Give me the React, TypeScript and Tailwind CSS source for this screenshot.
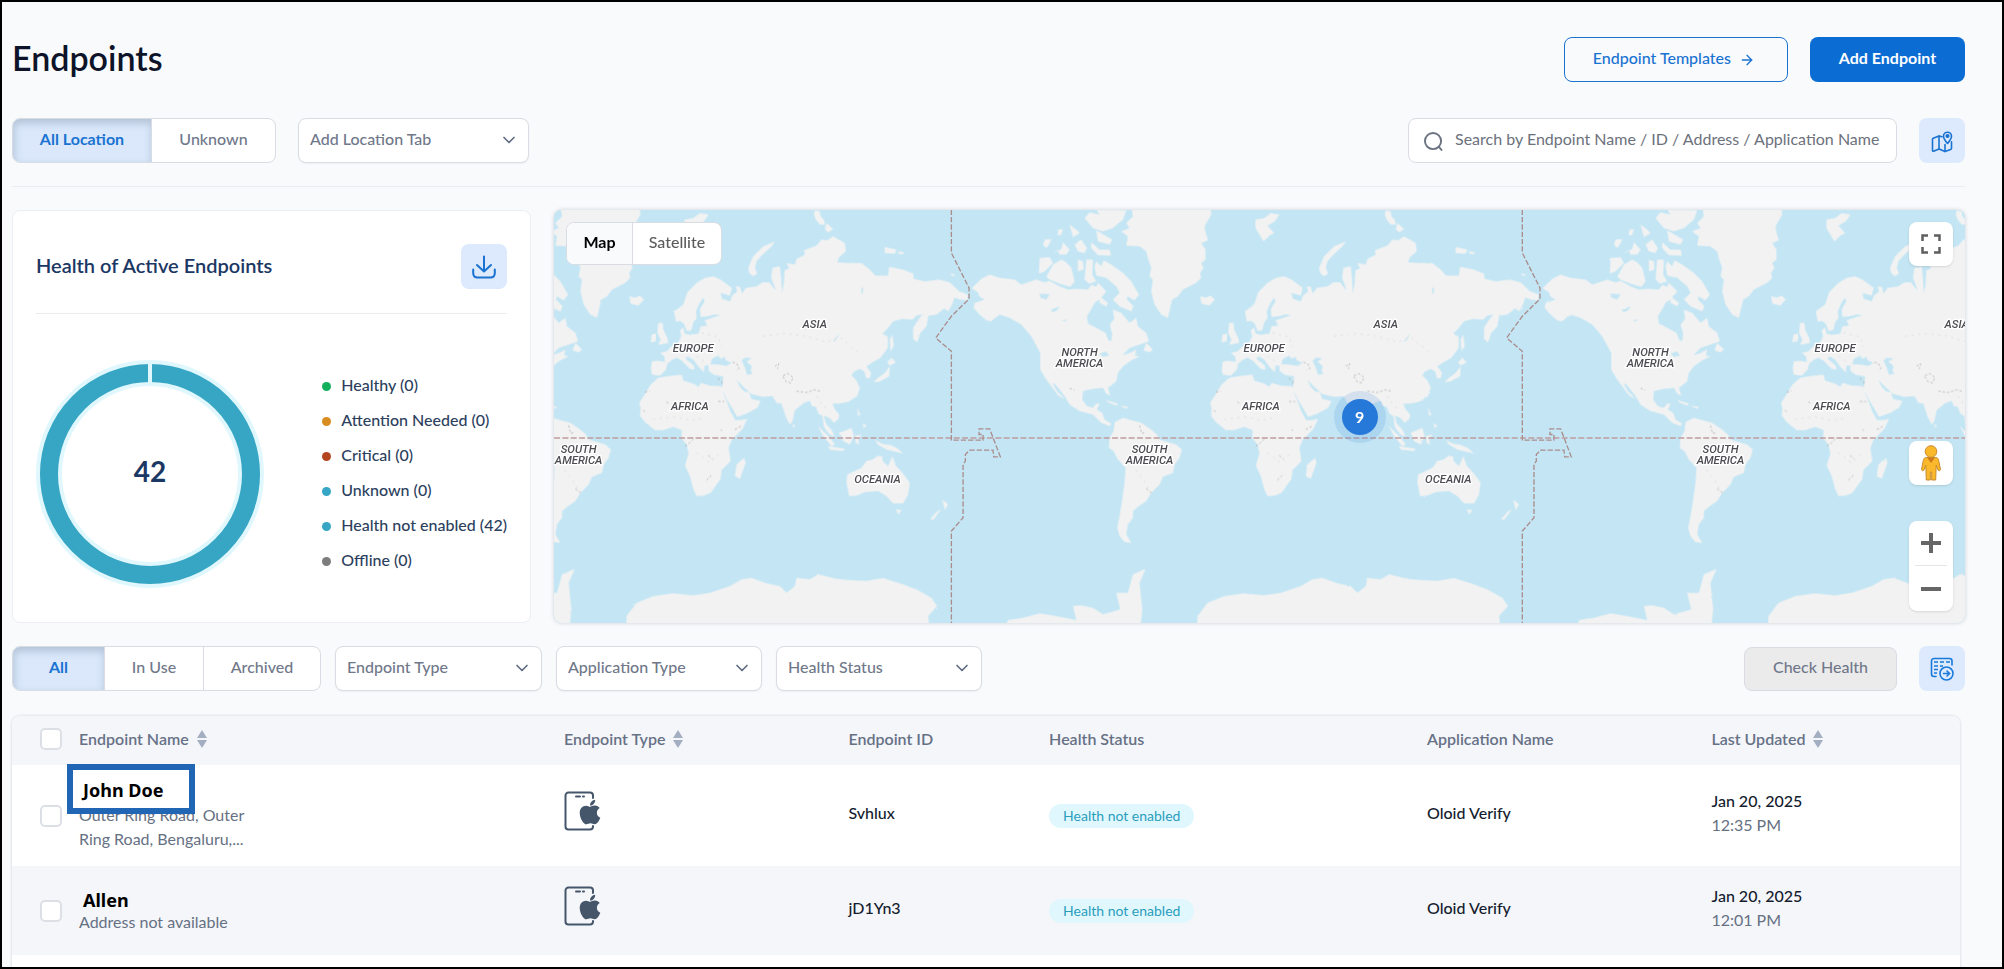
import type { ReactNode } from "react";
import { ArrowRight, ChevronDown } from "lucide-react";
import { FaApple } from "react-icons/fa";

type Endpoint = {
  id: string;
  name: string;
  address: string;
  app: string;
  date: string;
  time: string;
  highlighted?: boolean;
};

const endpoints: Endpoint[] = [
  {
    id: "Svhlux",
    name: "John Doe",
    address: "Outer Ring Road, Outer Ring Road, Bengaluru,...",
    app: "Oloid Verify",
    date: "Jan 20, 2025",
    time: "12:35 PM",
    highlighted: true,
  },
  {
    id: "jD1Yn3",
    name: "Allen",
    address: "Address not available",
    app: "Oloid Verify",
    date: "Jan 20, 2025",
    time: "12:01 PM",
  },
];

const legend = [
  { label: "Healthy (0)", dot: "bg-[#12b05c]" },
  { label: "Attention Needed (0)", dot: "bg-[#d98c1f]" },
  { label: "Critical (0)", dot: "bg-[#b3461f]" },
  { label: "Unknown (0)", dot: "bg-[#37a6c4]" },
  { label: "Health not enabled (42)", dot: "bg-[#37a6c4]" },
  { label: "Offline (0)", dot: "bg-[#7d7d7d]" },
];

// One world is WORLD units wide, the map repeats it sideways.
const WORLD = 1714;

const eastLand = [
  // Europe and Asia
  "306,525 303,508 306,485 325,484 345,487 343,470 330,460 350,455 365,440 385,428 394,410 390,392 400,383 404,402 420,406 446,402 452,380 472,378 464,362 480,357 495,352 512,347 495,344 472,350 452,352 450,328 464,305 460,294 448,312 438,335 440,355 430,368 424,392 410,394 402,372 390,364 378,366 372,335 400,315 412,278 440,250 465,235 490,230 512,240 546,265 540,288 512,280 516,298 540,305 547,287 562,276 558,260 570,262 576,282 588,265 620,260 638,248 658,248 670,264 678,272 664,235 668,205 690,200 694,240 696,282 702,250 704,212 718,206 710,190 735,195 740,178 765,165 762,152 800,138 815,120 832,122 850,110 885,130 888,155 868,172 862,188 900,190 935,190 960,210 976,228 1015,228 1018,202 1060,210 1090,222 1092,238 1125,245 1168,240 1200,248 1228,275 1255,285 1252,302 1232,300 1214,294 1208,312 1196,335 1184,326 1160,345 1136,348 1130,380 1112,400 1102,428 1090,418 1090,385 1104,362 1118,344 1100,348 1088,360 1058,358 1030,365 1012,388 998,402 1014,412 1014,445 992,475 968,488 950,500 964,520 960,536 948,535 944,516 930,508 912,516 905,528 920,542 930,565 922,590 895,607 868,612 848,612 854,628 868,645 866,658 852,670 840,656 822,648 828,672 846,692 854,712 838,704 822,682 818,650 806,642 798,622 786,620 780,604 762,610 735,632 728,665 720,675 708,652 695,612 680,610 668,590 640,592 605,584 578,560 560,540 570,562 584,576 598,578 604,598 632,605 622,625 590,642 562,652 548,628 532,602 520,578 514,572 518,552 520,530 492,526 476,514 476,498 464,498 462,518 446,502 430,480 414,470 406,476 432,498 434,510 420,508 396,484 380,474 364,482 352,492 348,510 330,528",
  // Africa
  "325,535 350,530 395,525 400,543 430,552 446,562 452,550 480,558 513,560 522,585 530,605 542,636 556,662 574,662 592,658 578,688 545,722 536,745 542,785 515,812 512,838 482,880 462,888 440,890 430,868 420,830 405,798 416,762 410,735 394,715 396,692 370,682 340,692 315,692 285,668 270,648 272,628 268,610 282,588 302,555",
  "325,370 338,370 340,390 352,415 355,430 325,436 332,420 322,400",
  "305,405 320,402 318,425 302,428",
  "238,290 255,294 270,288 282,300 265,318 242,312",
  "675,125 665,140 635,168 620,185 615,205 622,222 610,230 598,220 595,205 610,170 640,140",
  "404,60 430,55 450,40 476,45 462,65 440,78 460,100 446,108 428,125 416,105 404,85",
  "795,32 810,35 812,50 822,60 825,75 810,75 798,60 792,45",
  "830,70 850,88 835,98 825,88",
  "1005,142 1040,150 1035,162 1005,160",
  "1045,155 1062,158 1060,164 1046,162",
  "1200,222 1215,224 1210,230",
  "1028,405 1032,440 1022,455 1020,420",
  "1025,475 1038,488 1020,498 1012,488",
  "1020,500 1018,530 990,545 970,548 985,535 1005,520",
  "922,625 932,645 925,650",
  "940,670 950,680 940,685",
  "728,672 736,680 731,685",
  "870,700 905,685 912,710 900,735 880,725",
  "805,680 840,715 855,735 845,740 820,710",
  "835,740 885,748 880,755 840,750",
  "915,710 935,705 925,720 928,735 918,730",
  "975,722 1000,734 1020,736 1042,746 1060,762 1030,755 1010,750 985,735",
  // Australia and New Zealand
  "892,825 920,812 935,805 950,785 968,780 985,768 998,772 998,785 1015,800 1028,770 1038,798 1060,822 1080,850 1075,885 1060,912 1030,912 1010,890 985,875 945,878 920,888 898,890 890,850",
  "1038,930 1055,932 1046,945",
  "1178,900 1195,915 1185,932",
  "1175,928 1150,962 1142,958 1160,938",
  "583,775 587,790 570,838 555,830 560,795",
  // Antarctica
  "228,1290 230,1250 260,1210 310,1190 370,1182 430,1188 480,1180 540,1160 575,1140 605,1135 650,1152 690,1160 710,1180 735,1160 740,1135 780,1140 805,1125 860,1138 900,1142 950,1144 1000,1136 1060,1155 1100,1170 1145,1195 1162,1220 1135,1250 1140,1290",
];

const westLand = [
  // North America
  "70,262 95,238 120,225 150,235 195,240 215,255 260,240 285,248 300,244 330,260 355,270 380,268 415,270 425,256 440,262 445,250 470,275 450,300 436,308 424,330 412,350 415,372 440,385 468,400 475,420 485,425 488,402 480,375 494,358 490,330 515,340 540,370 560,355 565,380 590,400 598,425 570,435 540,445 518,468 545,458 560,450 556,468 570,470 545,482 520,500 505,520 500,545 475,565 482,588 470,582 460,565 430,568 400,575 398,600 412,620 430,625 440,612 450,612 442,630 458,640 465,660 485,672 480,680 455,670 430,645 390,635 360,615 345,590 318,555 308,550 322,575 345,598 326,588 290,540 272,510 272,460 245,410 215,375 180,355 150,345 130,360 95,395 125,365 110,362 90,345 72,325 75,310 105,300 90,292 85,278 68,268",
  "590,430 610,450 600,458 582,452",
  "470,602 505,612 500,618 475,608",
  "510,618 535,622 530,628",
  // Arctic islands
  "270,175 300,172 310,190 285,215 268,222",
  "290,232 310,195 335,180 350,188 365,205 375,245 362,262 330,252 300,240",
  "440,185 455,200 462,182 485,195 520,220 545,245 568,285 555,302 534,290 532,300 552,320 545,335 510,320 490,300 510,280 500,260 470,235 440,228 435,200",
  "450,290 475,310 470,320 450,310",
  "420,38 450,45 440,30 530,32 520,60 490,85 460,95 430,85 405,55",
  "425,128 450,150 480,150 484,168 445,166 425,145",
  "440,92 488,120 480,135 445,125",
  "285,120 305,118 300,130 290,145 280,135",
  "310,160 335,148 340,128 360,150 350,165 330,165 325,150",
  "325,90 340,88 335,105 325,108",
  "360,75 380,90 390,100 370,112",
  "375,135 395,120 412,145 405,160 385,155",
  "385,180 400,185 402,210 385,215",
  "410,180 430,180 428,225 440,245 418,252 405,240",
  // Greenland
  "545,20 783,20 785,45 765,80 768,98 775,122 755,130 768,150 768,180 755,190 762,205 752,220 755,235 740,250 700,270 685,290 668,300 655,355 635,345 615,315 605,275 610,240 600,230 605,205 595,175 590,155 570,140 530,138 535,110 515,95 540,85 530,70 550,50",
  // South America
  "495,668 520,655 545,662 575,670 605,690 622,705 630,720 680,735 697,750 690,775 675,795 670,820 640,832 630,855 605,880 590,905 568,920 550,935 550,955 535,975 530,1005 545,1030 525,1028 510,1010 503,985 510,950 518,900 525,850 528,805 505,780 492,755 478,745 480,715 492,695",
  "165,1290 175,1262 220,1255 270,1242 320,1250 380,1262 370,1220 395,1218 430,1225 460,1245 512,1230 500,1180 535,1180 550,1125 588,1108 570,1150 578,1230 572,1290",
];

const seas = [
  "482,494 486,478 505,468 512,478 524,472 528,482 545,490 530,499 502,494",
  "575,482 586,474 605,476 590,486 606,500 602,512 608,522 592,526 584,502",
  "850,425 868,402 866,408 854,426",
  "935,262 940,268 938,285 934,278",
];

const lakes = [
  "270,282 300,284 290,300 272,294",
  "305,330 330,320 322,332 308,338",
  "335,362 352,360 346,365",
  "450,462 470,455 478,468 460,472",
];

function Label({ x, y, children }: { x: number; y: number; children: string }) {
  return (
    <text
      x={x}
      y={y}
      textAnchor="middle"
      className="fill-[#4c4c52] stroke-white font-['Roboto',sans-serif] text-[34px] italic [paint-order:stroke] [stroke-width:8px]"
    >
      {children}
    </text>
  );
}

function WorldMap() {
  const copies = [-1, 0, 1, 2];
  return (
    <svg
      viewBox="12 30 4236 1242"
      preserveAspectRatio="xMinYMid slice"
      className="absolute inset-0 h-full w-full"
      role="img"
      aria-label="World map"
    >
      <defs>
        <filter id="coast" x="0" y="0" width="100%" height="100%">
          <feTurbulence type="fractalNoise" baseFrequency="0.09" numOctaves="2" seed="4" />
          <feDisplacementMap in="SourceGraphic" scale="5" />
        </filter>
        <g id="land">
          <g fill="#f2f2f2">
            {eastLand.map((p) => (
              <polygon key={p} points={p} />
            ))}
          </g>
          <g fill="#c4e6f4">
            {seas.map((p) => (
              <polygon key={p} points={p} />
            ))}
          </g>
          <g transform="translate(1200 0)">
            <g fill="#f2f2f2">
              {westLand.map((p) => (
                <polygon key={p} points={p} />
              ))}
            </g>
            <g fill="#c4e6f4">
              {lakes.map((p) => (
                <polygon key={p} points={p} />
              ))}
            </g>
          </g>
          <g fill="none" stroke="#a9a3a5" strokeWidth="2" strokeDasharray="7 6">
            <path d="M675,500l12,-8l-4,16 M700,528l14,-6l16,12l-8,16l-14,-4l-8,-14z M740,575l30,4l24,-8l18,4" />
            <path d="M548,488l12,4l8,14l-10,6 M505,535l4,8 M516,545v14 M505,606h18 M285,578l14,-4" />
            <path d="M405,740l14,-10l12,-12 M475,768l12,10 M470,842l18,-18 M512,690l4,4 M555,690l22,-12" />
            <path d="M1770,678l6,24l14,-4 M1790,868l16,12 M1560,566l14,6 M350,606l6,8 M280,632l8,10" />
          </g>
          <g fill="none" stroke="#d8d5d6" strokeWidth="2" strokeDasharray="6 14">
            <path d="M640,410l60,-8l60,6l70,20l40,-16l30,26l30,24 M455,400l50,12l10,30 M440,470l30,20" />
            <path d="M310,660l60,-8l50,10l40,-6 M440,760l40,30l30,-30 M800,590l20,30l20,10 M1758,812l24,30l14,24" />
          </g>
        </g>
        <g id="labels">
          <path
            d="M1205,30V160L1258,265V298L1205,350L1158,415L1205,455V722H1300V705H1288V688H1320L1352,772H1332L1330,752H1260L1247,765V785L1240,795V955L1205,995V1290"
            fill="none"
            stroke="#a98d8d"
            strokeWidth="4"
            strokeDasharray="16 6"
          />
          <Label x={430} y={458}>EUROPE</Label>
          <Label x={795} y={385}>ASIA</Label>
          <Label x={420} y={632}>AFRICA</Label>
          <Label x={983} y={850}>OCEANIA</Label>
          <Label x={1590} y={468}>NORTH</Label>
          <Label x={1590} y={502}>AMERICA</Label>
          <Label x={1800} y={762}>SOUTH</Label>
          <Label x={1800} y={793}>AMERICA</Label>
        </g>
      </defs>
      <rect x="12" y="0" width="4300" height="1300" fill="#c4e6f4" />
      <g filter="url(#coast)">
        {copies.map((n) => (
          <use key={n} href="#land" x={n * WORLD} />
        ))}
      </g>
      <path d="M12,715H4300" stroke="#c09c9f" strokeWidth="5" strokeDasharray="18 7" />
      {copies.map((n) => (
        <use key={n} href="#labels" x={n * WORLD} />
      ))}
    </svg>
  );
}

function Donut() {
  return (
    <svg viewBox="0 0 228 228" className="size-57 shrink-0" role="img" aria-label="42 active endpoints">
      <circle cx="114" cy="114" r="101" fill="none" stroke="#e0f8fd" strokeWidth="26" />
      <circle cx="114" cy="114" r="101" fill="none" stroke="#37a6c4" strokeWidth="18" />
      <rect x="112" y="2" width="4" height="24" fill="#e0f8fd" />
      <text
        x="114"
        y="122"
        textAnchor="middle"
        className="fill-[#1b3764] font-['Lato',sans-serif] text-[28px] font-bold"
      >
        42
      </text>
    </svg>
  );
}

function MapPinIcon() {
  return (
    <svg viewBox="0 0 24 24" className="size-6" fill="none" stroke="#1a73d1" strokeWidth="1.6" strokeLinecap="round" strokeLinejoin="round">
      <path d="M12 7.800 9 7 3.2 9.3a1 1 0 0 0-.7.9v11.3c0 .6.5.9 1 .7L9 20l6 2.6 5.6-2.2c.6-.2.9-.6.9-1.1v-6.6" />
      <path d="M9 7v13M15 15.500v7" />
      <path d="M17.500 14.500c-2.200-2.600-4-4.700-4-7.300a4 4 0 0 1 8 0c0 2.600-1.800 4.700-4 7.300Z" />
      <circle cx="17.500" cy="7" r="1.300" fill="#1a73d1" />
    </svg>
  );
}

function DownloadIcon() {
  return (
    <svg viewBox="0 0 24 24" className="size-6" fill="none" stroke="#1a73d1" strokeWidth="2" strokeLinecap="round" strokeLinejoin="round">
      <path d="M12 1.500v14.500M5 10l7 6.500 7-6.500" />
      <path d="M1.200 14.500v3.500c0 3 1.600 4.500 4.500 4.500h12.600c2.900 0 4.500-1.500 4.500-4.500v-3.500" />
    </svg>
  );
}

function TableExportIcon() {
  return (
    <svg viewBox="0 0 24 24" className="size-6" fill="none" stroke="#1a7ad9" strokeWidth="1.600" strokeLinecap="round">
      <path d="M6 19.500H4a2.500 2.500 0 0 1-2.500-2.500V4A2.500 2.500 0 0 1 4 1.500h15.500A2.500 2.500 0 0 1 22 4v4" />
      <path d="M4 5h4M10 5h4M16 5h4M4 9h4M10 9h3M4 12.500h4M4 16h3" strokeLinecap="butt" />
      <circle cx="16.500" cy="16.500" r="6.500" />
      <path d="M13.500 16.500h5.500M17 14l2.500 2.500L17 19" />
    </svg>
  );
}

function PhoneAppleIcon() {
  return (
    <svg viewBox="0 0 38 40" className="h-10 w-[38px]" role="img" aria-label="iOS device">
      <path
        d="M29 7V4.500A3 3 0 0 0 26 1.500H4.500A3 3 0 0 0 1.500 4.500v31a3 3 0 0 0 3 3H26a3 3 0 0 0 3-3V35"
        fill="none"
        stroke="#45566b"
        strokeWidth="2"
        strokeLinecap="round"
      />
      <path d="M12 5.500h4M19 5.500h1" stroke="#45566b" strokeWidth="2" strokeLinecap="round" />
      <FaApple x={12} y={7} size={28} color="#45566b" />
    </svg>
  );
}

function Pegman() {
  return (
    <svg viewBox="0 0 20 36" className="h-9 w-5" stroke="#c98a2b" strokeWidth="1">
      <path
        d="M5.500 12.500h9c2 0 2.800 1.200 3.200 3l1.700 8.500c.2 1-.3 1.700-1.100 1.700-.8 0-1.300-.5-1.600-1.300l-1.500-4.400-.5 15h-4V27H9.300v8H5.300l-.5-15-1.500 4.400c-.3.8-.8 1.300-1.600 1.300-.8 0-1.300-.7-1.100-1.700l1.700-8.500c.4-1.800 1.200-3 3.200-3Z"
        fill="#f9b92b"
      />
      <path d="M6 12.500h8L10 18Z" fill="#d07a1c" stroke="none" />
      <circle cx="10" cy="6.500" r="5.800" fill="#f9b92b" />
    </svg>
  );
}

function SortIcon() {
  return (
    <svg viewBox="0 0 10 18" className="h-[18px] w-2.5" fill="#a3aec2">
      <path d="M5 0l5 8H0ZM5 18l5-8H0Z" />
    </svg>
  );
}

function Dropdown({ label, className }: { label: string; className: string }) {
  return (
    <div className={`relative ${className}`}>
      <select
        aria-label={label}
        className="h-[45px] w-full appearance-none rounded-lg border border-[#d9dce3] bg-white pb-1 pl-[11px] text-base text-[#70788a] shadow-xs"
      >
        <option>{label}</option>
      </select>
      <ChevronDown className="pointer-events-none absolute top-3 right-2.5 size-5 text-[#5f6b80]" />
    </div>
  );
}

function Tabs({ tabs }: { tabs: { label: string; className: string }[] }) {
  return (
    <div className="flex h-[45px] overflow-hidden rounded-lg border border-[#d9dce3] bg-white">
      {tabs.map((tab, i) => (
        <button
          key={tab.label}
          className={`pb-1 ${tab.className} ${
            i === 0
              ? "bg-[#dbe8fb] font-bold text-[#1a73d1] shadow-[inset_1px_4px_8px_#afc0d4]"
              : "border-l border-[#d9dce3] text-[#70788a]"
          }`}
        >
          {tab.label}
        </button>
      ))}
    </div>
  );
}

function IconButton({ label, children }: { label: string; children: ReactNode }) {
  return (
    <button
      aria-label={label}
      className="flex h-[45px] w-[46px] shrink-0 items-center justify-center rounded-lg bg-[#dde9fc]"
    >
      {children}
    </button>
  );
}

function HealthCard() {
  return (
    <section className="w-[519px] shrink-0 rounded-lg border border-[#eceef3] bg-white px-[23px] pt-[33px] pb-[34px]">
      <div className="flex items-center justify-between border-b border-[#eaecef] pb-6">
        <h2 className="pb-1 text-xl font-semibold text-[#1b3764]">Health of Active Endpoints</h2>
        <IconButton label="Download report">
          <DownloadIcon />
        </IconButton>
      </div>
      <div className="mt-[46px] flex items-center justify-between">
        <Donut />
        <ul className="flex flex-col gap-[11px] pb-1 text-base text-[#2d3f5e]">
          {legend.map((item) => (
            <li key={item.label} className="flex h-6 items-center gap-2.5">
              <span className={`mt-1 size-[9px] rounded-full ${item.dot}`} />
              {item.label}
            </li>
          ))}
        </ul>
      </div>
    </section>
  );
}

function MapCard() {
  return (
    <section className="relative min-w-0 flex-1 overflow-hidden rounded-lg bg-[#c4e6f4] shadow-[0_0_4px_#c9ced6]">
      <WorldMap />
      <div className="absolute top-3 left-3 flex h-[43px] overflow-hidden rounded-lg border border-[#d9dce3] bg-white">
        <button className="w-[66px] border-r border-[#d9dce3] bg-[#f9fafc] pb-1 font-bold text-black">Map</button>
        <button className="w-22 pb-1 text-[#5c5c5c]">Satellite</button>
      </div>
      <button className="absolute top-1/2 left-[57.1%] size-9 -translate-x-1/2 -translate-y-1/2 rounded-full bg-[#2679d8] font-bold text-white ring-8 ring-[#2679d8]/15">
        9
      </button>
      <div className="absolute top-3 right-3 bottom-3 flex flex-col">
        <button
          aria-label="Toggle fullscreen"
          className="flex size-11 items-center justify-center rounded-lg bg-white shadow"
        >
          <svg viewBox="0 0 20 20" className="size-5" fill="none" stroke="#5f5f5f" strokeWidth="2.5">
            <path d="M1.500 7V1.500H7M13 1.500h5.500V7M18.500 13v5.500H13M7 18.500H1.500V13" />
          </svg>
        </button>
        <button
          aria-label="Street View"
          className="mt-auto flex size-11 items-center justify-center rounded-lg bg-white shadow"
        >
          <Pegman />
        </button>
        <div className="mt-9 flex w-11 flex-col rounded-lg bg-white px-1.5 shadow">
          <button aria-label="Zoom in" className="flex h-[45px] items-center justify-center border-b border-[#e6e6e6]">
            <svg viewBox="0 0 20 20" className="size-5" stroke="#666" strokeWidth="4">
              <path d="M10 0v20M0 10h20" />
            </svg>
          </button>
          <button aria-label="Zoom out" className="flex h-[45px] items-center justify-center">
            <svg viewBox="0 0 20 20" className="size-5" stroke="#666" strokeWidth="4">
              <path d="M0 10h20" />
            </svg>
          </button>
        </div>
      </div>
    </section>
  );
}

const checkbox = "block size-[22px] appearance-none rounded-[5px] border-2 border-[#dcdfe5] bg-white";

function EndpointTable() {
  return (
    <div className="mr-[5px] overflow-hidden rounded-t-lg bg-white shadow-[0_0_3px_#c9ced8]">
      <table className="w-full table-fixed text-left text-base">
        <colgroup>
          <col className="w-[67px]" />
          <col className="w-[24.9%]" />
          <col className="w-[14.6%]" />
          <col className="w-[10.3%]" />
          <col className="w-[19.4%]" />
          <col className="w-[14.6%]" />
          <col />
        </colgroup>
        <thead className="bg-[#f4f6fa] text-[#677186]">
          <tr className="h-[49px] *:pb-1 *:font-semibold">
            <th className="pl-7">
              <input type="checkbox" aria-label="Select all endpoints" className={checkbox} />
            </th>
            <th>
              <span className="flex items-center gap-2">
                Endpoint Name <SortIcon />
              </span>
            </th>
            <th>
              <span className="flex items-center gap-2">
                Endpoint Type <SortIcon />
              </span>
            </th>
            <th>Endpoint ID</th>
            <th>Health Status</th>
            <th>Application Name</th>
            <th>
              <span className="flex items-center gap-2">
                Last Updated <SortIcon />
              </span>
            </th>
          </tr>
        </thead>
        <tbody className="text-[#141c2e]">
          {endpoints.map((row) => (
            <tr key={row.id} className={row.highlighted ? "h-[101px] bg-white" : "h-[89px] bg-[#f4f6fa]"}>
              <td className="pl-7">
                <input type="checkbox" aria-label={`Select ${row.name}`} className={checkbox} />
              </td>
              <td className="relative">
                {row.highlighted ? (
                  <>
                    <p className="w-44 pt-[22px] leading-6 font-normal text-[#667083]">{row.address}</p>
                    <span className="absolute -top-px -left-3 flex h-[50px] w-32 items-center border-6 border-[#2066b4] bg-white pt-0.5 pl-2.5 font-['Noto_Sans',sans-serif] text-lg font-bold text-black">
                      {row.name}
                    </span>
                  </>
                ) : (
                  <>
                    <p className="pl-1 font-['Noto_Sans',sans-serif] text-lg leading-6 font-bold text-black">
                      {row.name}
                    </p>
                    <p className="pb-0.5 leading-5 font-normal text-[#667083]">{row.address}</p>
                  </>
                )}
              </td>
              <td className="pb-2.5">
                <PhoneAppleIcon />
              </td>
              <td className="pb-1.5">{row.id}</td>
              <td>
                <span className="inline-block rounded-full bg-[#e0f8fd] px-3.5 pb-px text-sm leading-[23px] font-normal text-[#2a9dbd]">
                  Health not enabled
                </span>
              </td>
              <td className="pb-1.5">{row.app}</td>
              <td className="pb-1.5 leading-6">
                {row.date}
                <br />
                <span className="font-normal text-[#667083]">{row.time}</span>
              </td>
            </tr>
          ))}
          <tr className="h-[89px]">
            <td colSpan={7} />
          </tr>
        </tbody>
      </table>
    </div>
  );
}

export default function App() {
  return (
    <div className="h-screen overflow-hidden border-2 border-black bg-[#f9fafc] pr-[37px] pl-2.5 font-['Lato',sans-serif] text-base font-medium">
      <header className="flex items-center justify-between pt-[35px]">
        <h1 className="pb-1 text-[34px] leading-10 font-semibold text-[#0d1429]">Endpoints</h1>
        <div className="flex gap-[22px]">
          <a
            href="#templates"
            className="flex h-[45px] items-center gap-2 rounded-lg border border-[#1a73d1] pr-8 pb-1 pl-7 text-[#1a73d1]"
          >
            Endpoint Templates
            <ArrowRight className="mt-1 size-4" />
          </a>
          <button className="h-[45px] w-[155px] rounded-lg bg-[#0b6dd3] pb-1 font-bold text-white">
            Add Endpoint
          </button>
        </div>
      </header>

      <div className="mt-9 flex items-center justify-between border-b border-[#eaecef] pb-[23px]">
        <div className="flex gap-[22px]">
          <Tabs
            tabs={[
              { label: "All Location", className: "w-[138px]" },
              { label: "Unknown", className: "w-[124px]" },
            ]}
          />
          <Dropdown label="Add Location Tab" className="w-[231px]" />
        </div>
        <div className="flex gap-[22px]">
          <div className="relative">
            <svg
              viewBox="0 0 20 20"
              className="absolute top-3.5 left-4 size-[19px]"
              fill="none"
              stroke="#6b7280"
              strokeWidth="2"
            >
              <circle cx="9.500" cy="9.500" r="8.500" />
              <path d="M15.500 15.500 19 19.500" />
            </svg>
            <input
              type="text"
              aria-label="Search endpoints"
              placeholder="Search by Endpoint Name / ID / Address / Application Name"
              className="h-[45px] w-[489px] rounded-lg border border-[#d9dce3] bg-white pr-1 pb-1 pl-[46px] font-normal placeholder:text-[#6c717c]"
            />
          </div>
          <IconButton label="Toggle map">
            <MapPinIcon />
          </IconButton>
        </div>
      </div>

      <div className="mt-[23px] flex gap-[23px]">
        <HealthCard />
        <MapCard />
      </div>

      <div className="mt-[23px] mb-[25px] flex items-center justify-between">
        <div className="flex gap-3.5">
          <Tabs
            tabs={[
              { label: "All", className: "w-[91px]" },
              { label: "In Use", className: "w-[99px]" },
              { label: "Archived", className: "w-[117px]" },
            ]}
          />
          <Dropdown label="Endpoint Type" className="w-[207px]" />
          <Dropdown label="Application Type" className="w-[206px]" />
          <Dropdown label="Health Status" className="w-[206px]" />
        </div>
        <div className="flex items-center gap-[22px]">
          <button
            disabled
            className="h-11 w-[153px] rounded-lg border border-[#d9dce3] bg-[#ecebec] pb-1 text-[#70788a]"
          >
            Check Health
          </button>
          <IconButton label="Export table">
            <TableExportIcon />
          </IconButton>
        </div>
      </div>

      <EndpointTable />
    </div>
  );
}
